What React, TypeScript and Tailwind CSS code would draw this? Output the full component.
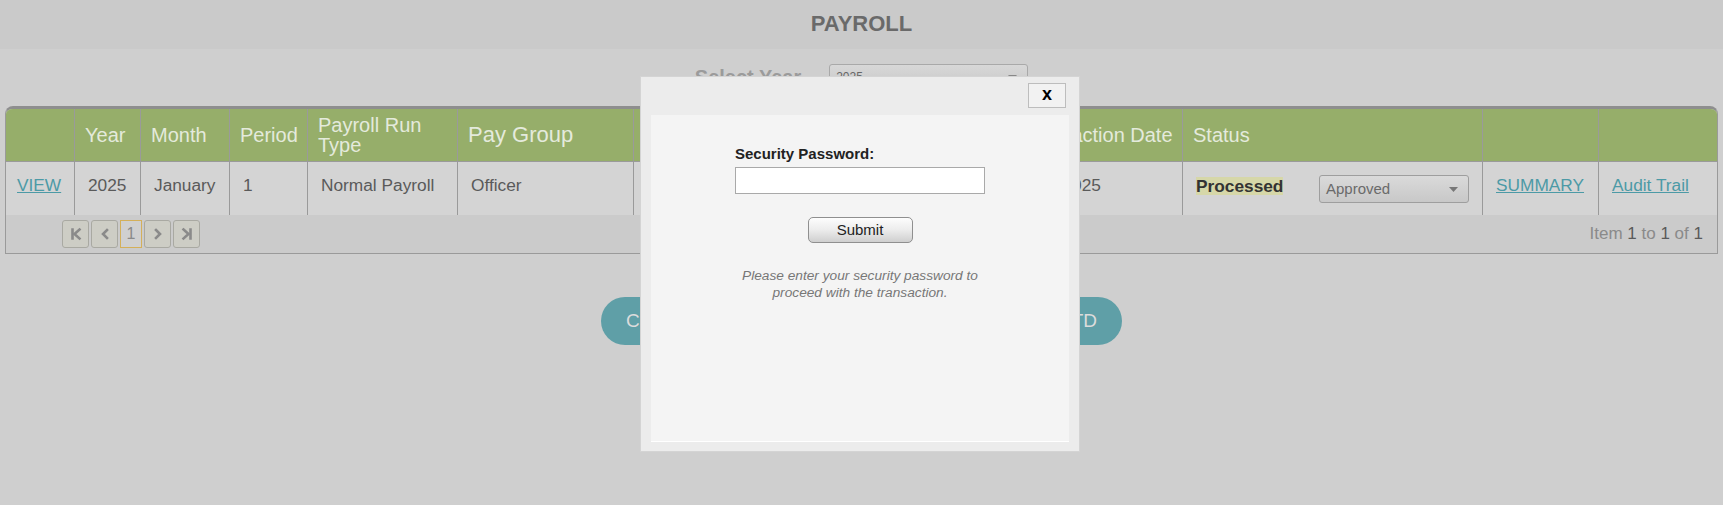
import React from "react";

const headers = [
  "",
  "Year",
  "Month",
  "Period",
  "Payroll Run Type",
  "Pay Group",
  "Payroll Cycle",
  "Payment Date",
  "Transaction Date",
  "Status",
  "",
  "",
];

function FirstIcon() {
  return (
    <svg width="14" height="14" viewBox="0 0 14 14" fill="none" stroke="#8a8a8a" strokeWidth="2.6" strokeLinecap="square">
      <path d="M3.5 2.5v9" />
      <path d="M10.5 2.5L5.5 7l5 4.5" />
    </svg>
  );
}
function PrevIcon() {
  return (
    <svg width="14" height="14" viewBox="0 0 14 14" fill="none" stroke="#8a8a8a" strokeWidth="2.6" strokeLinecap="square">
      <path d="M9 3L5 7l4 4" />
    </svg>
  );
}
function NextIcon() {
  return (
    <svg width="14" height="14" viewBox="0 0 14 14" fill="none" stroke="#8a8a8a" strokeWidth="2.6" strokeLinecap="square">
      <path d="M5 3l4 4-4 4" />
    </svg>
  );
}
function LastIcon() {
  return (
    <svg width="14" height="14" viewBox="0 0 14 14" fill="none" stroke="#8a8a8a" strokeWidth="2.6" strokeLinecap="square">
      <path d="M3.5 2.5L8.5 7l-5 4.5" />
      <path d="M10.5 2.5v9" />
    </svg>
  );
}

function Caret({ color = "#777" }: { color?: string }) {
  return (
    <svg width="9" height="5" viewBox="0 0 9 5">
      <path d="M0 0h9L4.5 5z" fill={color} />
    </svg>
  );
}

export default function App() {
  const th =
    "h-[53px] border-b border-[#9a9a9a] bg-[#96ae6a] pl-[10px] pr-[8px] text-left align-middle font-normal leading-[20px] text-[#e4eadc]";
  const td = "h-[53px] align-top pt-[13px] px-[13px] leading-[20px] text-[17.3px] text-[#5a5a5a] bg-[#d4d4d4]";
  const pagerBtn =
    "h-[28px] w-[27px] rounded-[3px] border border-[#a9a9a2] bg-[#cdcdc5] flex items-center justify-center";

  return (
    <div className="relative min-h-[505px] w-full bg-[#cfcfcf] font-['Liberation_Sans',Arial,sans-serif]">
      {/* Title band */}
      <div className="flex h-[49px] items-center justify-center bg-[#cacaca] pb-[2px]">
        <span className="text-[22px] font-bold text-[#6a6a6a]">PAYROLL</span>
      </div>

      {/* Select year */}
      <div className="mt-[15px] flex items-center justify-center gap-[28px]">
        <span className="text-[20px] font-bold leading-[26px] text-[#9b9b9b]">Select Year</span>
        <div className="flex h-[26px] w-[199px] items-center justify-between rounded-[3px] border border-[#a9a9a9] bg-linear-to-b from-[#d8d8d8] to-[#c6c6c6] pl-[6px] pr-[10px] text-[12px] text-[#666]">
          <span>2025</span>
          <Caret color="#888" />
        </div>
      </div>

      {/* Grid */}
      <div className="mx-[5px] mt-[16px] overflow-hidden rounded-t-[8px] border border-[#9a9a9a] border-t-[3px] border-t-[#8e8e8e]">
        <table className="w-full table-fixed border-separate border-spacing-0">
          <colgroup>
            <col className="w-[69px]" />
            <col className="w-[66px]" />
            <col className="w-[89px]" />
            <col className="w-[78px]" />
            <col className="w-[150px]" />
            <col className="w-[176px]" />
            <col className="w-[197px]" />
            <col className="w-[180px]" />
            <col className="w-[172px]" />
            <col className="w-[300px]" />
            <col className="w-[116px]" />
            <col />
          </colgroup>
          <thead>
            <tr>
              {headers.map((h, i) => (
                <th
                  key={i}
                  className={
                    th +
                    (i < headers.length - 1 ? " border-r" : "") +
                    (h === "Pay Group" ? " text-[22px]" : " text-[20px]") +
                    (h === "Payroll Run Type" ? "" : " whitespace-nowrap")
                  }
                >
                  {h}
                </th>
              ))}
            </tr>
          </thead>
          <tbody>
            <tr>
              <td className={td + " border-r border-[#9a9a9a] pl-[11px]"}>
                <span className="text-[#4c9aa6] underline">VIEW</span>
              </td>
              <td className={td + " border-r border-[#9a9a9a]"}>2025</td>
              <td className={td + " border-r border-[#9a9a9a]"}>January</td>
              <td className={td + " border-r border-[#9a9a9a]"}>1</td>
              <td className={td + " border-r border-[#9a9a9a]"}>Normal Payroll</td>
              <td className={td + " border-r border-[#9a9a9a]"}>Officer</td>
              <td className={td + " border-r border-[#9a9a9a]"}>Monthly</td>
              <td className={td + " border-r border-[#9a9a9a]"}>1/31/2025</td>
              <td className={td + " border-r border-[#9a9a9a]"}>1/31/2025</td>
              <td className={td + " border-r border-[#9a9a9a]"}>
                <div className="flex items-start justify-between">
                  <span className="mt-[2px] inline-block bg-[#d6d7a8] font-bold leading-[18px] text-[#333]">
                    Processed
                  </span>
                  <div className="flex h-[28px] w-[150px] items-center justify-between rounded-[3px] border border-[#9e9e9e] bg-linear-to-b from-[#dadada] to-[#c8c8c8] pl-[6px] pr-[10px] text-[15px] text-[#6a6a6a]">
                    <span>Approved</span>
                    <Caret />
                  </div>
                </div>
              </td>
              <td className={td + " border-r border-[#9a9a9a]"}>
                <span className="text-[#4c9aa6] underline">SUMMARY</span>
              </td>
              <td className={td}>
                <span className="text-[#4c9aa6] underline">Audit Trail</span>
              </td>
            </tr>
          </tbody>
        </table>
        <div className="flex h-[38px] items-center justify-between bg-[#cbcbcb] pl-[56px] pr-[14px]">
          <div className="flex items-center gap-[2px]">
            <div className={pagerBtn}>
              <FirstIcon />
            </div>
            <div className={pagerBtn}>
              <PrevIcon />
            </div>
            <div className="flex h-[28px] w-[22px] items-center justify-center border border-[#d4b05a] bg-[#d0d0d0] text-[16px] text-[#8a8a8a]">
              1
            </div>
            <div className={pagerBtn}>
              <NextIcon />
            </div>
            <div className={pagerBtn}>
              <LastIcon />
            </div>
          </div>
          <div className="text-[17px] text-[#8a8a8a]">
            Item <span className="text-[#5a5a5a]">1</span> to <span className="text-[#5a5a5a]">1</span> of{" "}
            <span className="text-[#5a5a5a]">1</span>
          </div>
        </div>
      </div>

      {/* Action buttons */}
      <div className="mt-[43px] flex justify-center gap-[20px]">
        <button className="h-[48px] w-[250px] rounded-full bg-[#5f9fa7] pl-[25px] text-left text-[19px] text-[#dcdcdc]">
          CREATE PAYROLL
        </button>
        <button className="h-[48px] w-[251px] rounded-full bg-[#5f9fa7] pr-[25px] text-right text-[19px] text-[#dcdcdc]">
          UPDATE YTD
        </button>
      </div>

      {/* Modal */}
      <div className="absolute left-[640px] top-[76px] h-[376px] w-[440px] border border-[#d4d4d4] bg-[#ececec]">
        <div className="mt-[6px] flex justify-end pr-[13px]">
          <div className="flex h-[25px] w-[38px] items-center justify-center border border-[#bdbdbd] bg-[#f2f2f2] pb-[3px] text-[18px] font-bold leading-none text-black">
            x
          </div>
        </div>
        <div className="mx-[10px] mt-[7px] flex h-[327px] flex-col items-center border-b border-white bg-[#f4f4f4]">
          <div className="w-[250px] pt-[30px]">
            <div className="text-[15px] font-bold leading-[17px] text-[#222]">Security Password:</div>
            <input
              type="password"
              readOnly
              className="mt-[5px] block h-[27px] w-[250px] border border-[#a9a9a9] bg-white outline-none"
            />
          </div>
          <button className="mt-[23px] h-[26px] w-[105px] rounded-[5px] border border-[#8f8f8f] bg-linear-to-b from-[#fdfdfd] via-[#ececec] to-[#cfcfcf] text-[15px] text-[#222]">
            Submit
          </button>
          <p className="mt-[24px] text-center text-[13.7px] italic leading-[17px] text-[#777]">
            Please enter your security password to
            <br />
            proceed with the transaction.
          </p>
        </div>
      </div>
    </div>
  );
}
